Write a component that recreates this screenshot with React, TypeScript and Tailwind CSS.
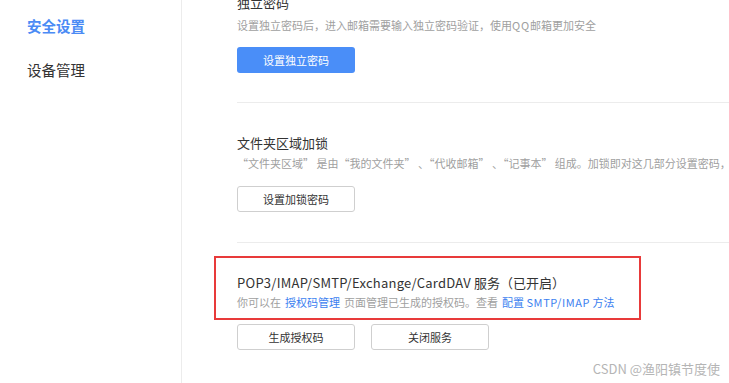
const font = { fontFamily: '"Noto Sans CJK SC", "Liberation Sans", sans-serif' };

function OutlineButton({ label }: { label: string }) {
  return (
    <button className="h-[26px] w-[118px] rounded-[3px] border border-[#cfcfcf] bg-white text-[11px] text-[#333]">
      {label}
    </button>
  );
}

export default function App() {
  return (
    <div className="relative flex h-[383px] w-[729px] overflow-hidden bg-white" style={font}>
      <aside className="w-[182px] shrink-0 border-r border-[#ececec] pl-[27px]">
        <div className="mt-[16px] h-[20px] text-[14.5px] font-bold leading-[20px] text-[#4b8bf5]">安全设置</div>
        <div className="mt-[24px] h-[20px] text-[14.5px] leading-[20px] text-[#333]">设备管理</div>
      </aside>

      <main className="min-w-0 flex-1 pl-[55px]">
        <section>
          <h3 className="-mt-[7px] h-[20px] text-[13px] font-normal leading-[20px] text-[#333]">独立密码</h3>
          <p className="mt-[4px] h-[16px] whitespace-nowrap text-[11px] leading-[16px] text-[#a0a0a0]">
            设置独立密码后，进入邮箱需要输入独立密码验证，使用<span className="tracking-[0.8px]">QQ</span>邮箱更加安全
          </p>
          <button className="mt-[14px] h-[26px] w-[118px] rounded-[3px] bg-[#4a8ef8] text-[11px] text-white">
            设置独立密码
          </button>
        </section>

        <div className="mt-[29px] h-px bg-[#ececec]" />

        <section>
          <h3 className="mt-[30px] h-[20px] text-[13px] font-normal leading-[20px] text-[#333]">文件夹区域加锁</h3>
          <p className="mt-[2px] h-[16px] whitespace-pre text-[11px] leading-[16px] text-[#a0a0a0]">
            {"“文件夹区域” 是由“我的文件夹” 、“代收邮箱” 、“记事本” 组成。加锁即对这几部分设置密码，"}
          </p>
          <div className="mt-[14px]">
            <OutlineButton label="设置加锁密码" />
          </div>
        </section>

        <div className="mt-[30px] h-px bg-[#ececec]" />

        <section>
          <div className="-ml-[23px] mt-[13px] h-[64px] w-[427px] border-2 border-[#e83a3a] pl-[21px] pt-[15px]">
            <h3 className="h-[20px] whitespace-nowrap text-[13px] font-normal leading-[20px] text-[#333]">
              <span className="tracking-[0.25px]">POP3/IMAP/SMTP/Exchange/CardDAV</span> 服务（已开启）
            </h3>
            <p className="mt-[1px] flex h-[16px] gap-[4px] whitespace-nowrap text-[11px] leading-[16px] text-[#a0a0a0]">
              <span>你可以在</span>
              <span className="text-[#3c7ff0]">授权码管理</span>
              <span>页面管理已生成的授权码。查看</span>
              <span className="text-[#3c7ff0]">
                配置 <span className="tracking-[0.6px]">SMTP/IMAP</span> 方法
              </span>
            </p>
          </div>
          <div className="mt-[4px] flex gap-[16px]">
            <OutlineButton label="生成授权码" />
            <OutlineButton label="关闭服务" />
          </div>
        </section>
      </main>

      <div className="absolute bottom-[5px] right-[9px] text-[13px] leading-[18px] text-[#b5b5b5]">
        CSDN @渔阳镇节度使
      </div>
    </div>
  );
}
